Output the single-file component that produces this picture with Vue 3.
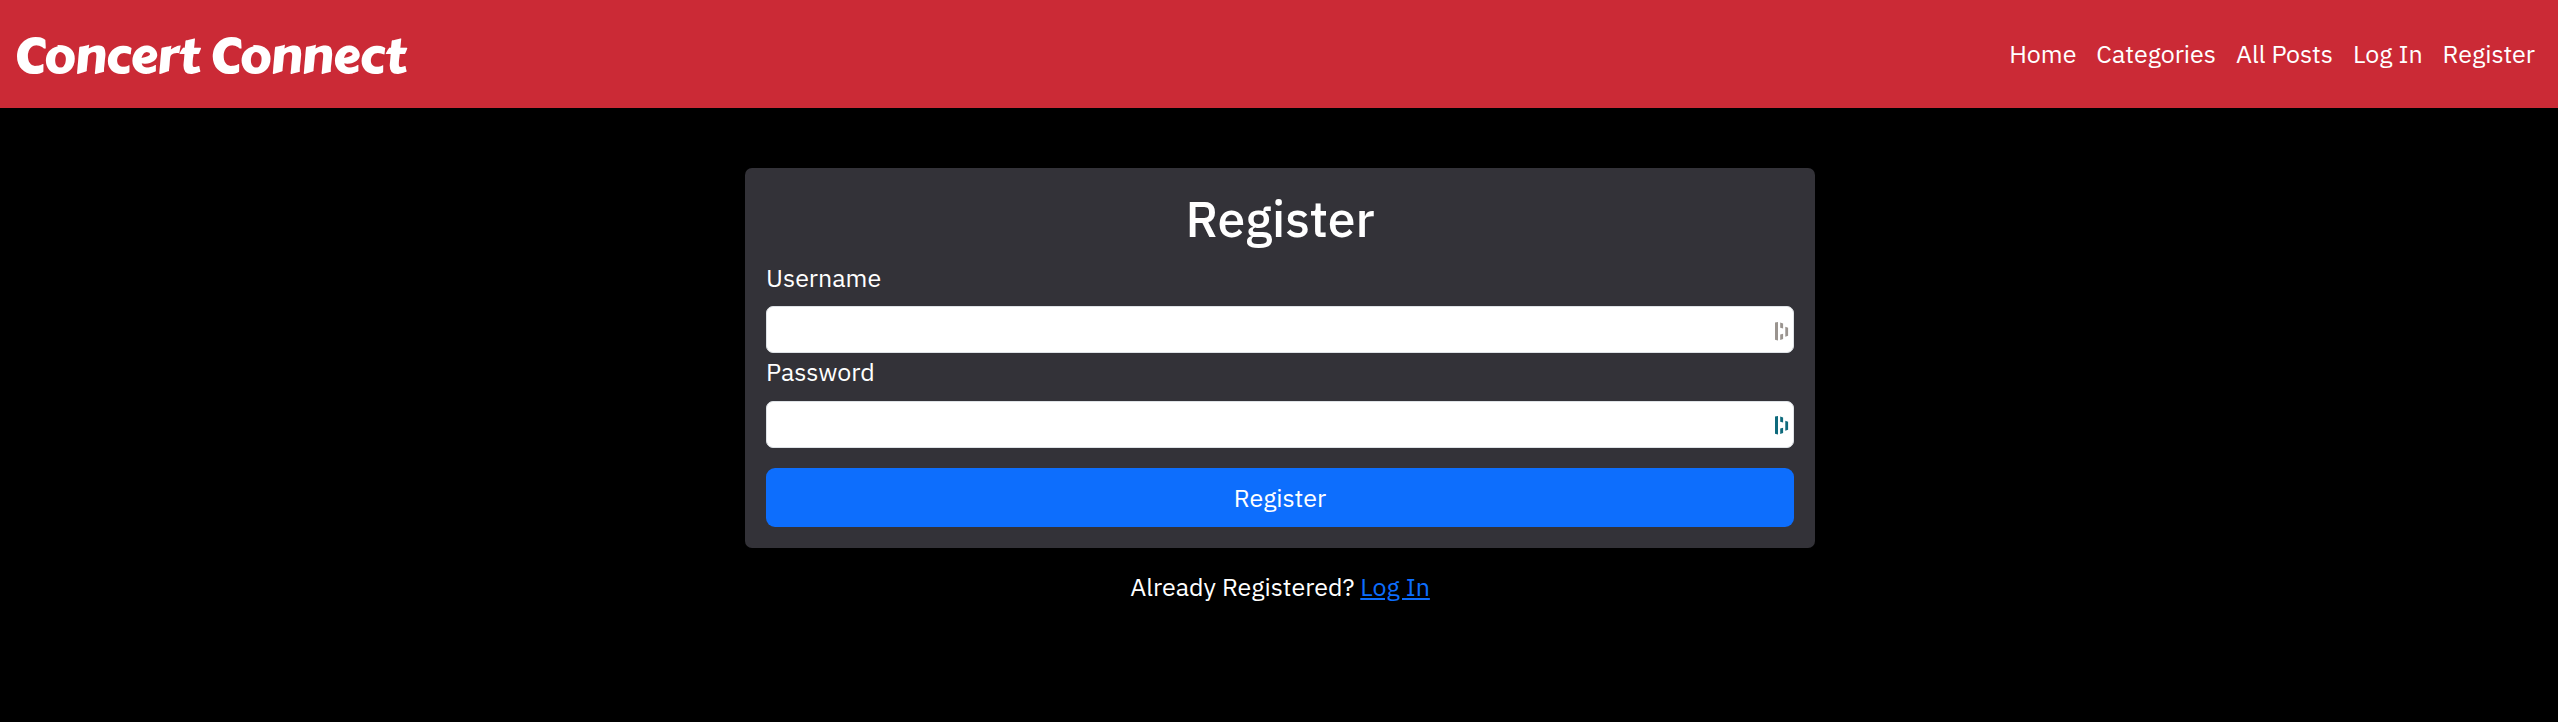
<script setup>
import { ref } from 'vue'

const links = ['Home', 'Categories', 'All Posts', 'Log In', 'Register']
const fields = [
  { id: 'username', label: 'Username', type: 'text', tone: 'muted' },
  { id: 'password', label: 'Password', type: 'password', tone: 'teal' },
]
const form = ref({ username: '', password: '' })
</script>

<template>
  <div class="page">
    <header class="navbar">
      <a class="brand">Concert Connect</a>
      <nav class="links">
        <a v-for="link in links" :key="link">{{ link }}</a>
      </nav>
    </header>
    <main>
      <form class="card" @submit.prevent>
        <h1>Register</h1>
        <div v-for="f in fields" :key="f.id" class="field">
          <label :for="f.id">{{ f.label }}</label>
          <div class="control">
            <input :id="f.id" v-model="form[f.id]" :type="f.type" />
            <svg :class="['manager', f.tone]" width="14" height="19" viewBox="0 0 14 19">
              <path d="M0 .6 3 0v18.4l-3-.6zM5.2.6l2.9.8v5.1L5.2 5.7zM5.2 12.6l2.9-.8v5.2l-2.9 1zM10.3 4.8l2.8 1v8l-2.8 1z" />
            </svg>
          </div>
        </div>
        <button type="submit">Register</button>
      </form>
      <p class="switch">Already Registered? <a href="#">Log In</a></p>
    </main>
  </div>
</template>

<style>
body {
  background: #000;
}
</style>

<style scoped>
.page {
  min-height: 722px;
  background: #000;
  color: #fff;
  font: 25px/36px "IBM Plex Sans", "Open Sans", sans-serif;
}
.navbar {
  box-sizing: border-box;
  height: 108px;
  padding: 0 23px 0 14px;
  display: flex;
  align-items: center;
  justify-content: space-between;
  background: #cb2a36;
}
.brand {
  font: 49px/60px "Carter One", Lato, sans-serif;
  letter-spacing: -0.5px;
  padding-top: 5px;
}
.links {
  display: flex;
  gap: 20px;
}
main {
  display: flex;
  flex-direction: column;
  align-items: center;
  padding: 60px 0 0 2px;
}
.card {
  box-sizing: border-box;
  width: 1070px;
  height: 380px;
  padding: 21px 21px 20px;
  border-radius: 7px;
  background: #333238;
}
h1 {
  margin: 0 0 11px;
  text-align: center;
  font: 500 50px/60px "IBM Plex Sans", "Noto Sans", sans-serif;
}
.field {
  height: 95px;
}
label {
  display: block;
  height: 46px;
  line-height: 36px;
}
.field:nth-of-type(2) label {
  line-height: 34px;
}
.control {
  position: relative;
  height: 47px;
}
input {
  display: block;
  box-sizing: border-box;
  width: 1028px;
  height: 47px;
  padding: 0 36px 0 12px;
  border: 1px solid #dee2e6;
  border-radius: 7px;
  background: #fff;
  font: inherit;
  outline: none;
}
.manager {
  position: absolute;
  right: 5px;
  top: 15px;
}
.muted {
  top: 16px;
  fill: #9a948f;
}
.teal {
  fill: #0e6a7c;
}
button {
  display: block;
  width: 100%;
  height: 59px;
  margin-top: 18px;
  padding: 0;
  border: 0;
  border-radius: 9px;
  background: #0d6efd;
  color: #fff;
  font: inherit;
}
.switch {
  margin: 21px 0 0;
}
.switch a {
  color: #0d6efd;
  text-decoration: underline;
}
</style>
